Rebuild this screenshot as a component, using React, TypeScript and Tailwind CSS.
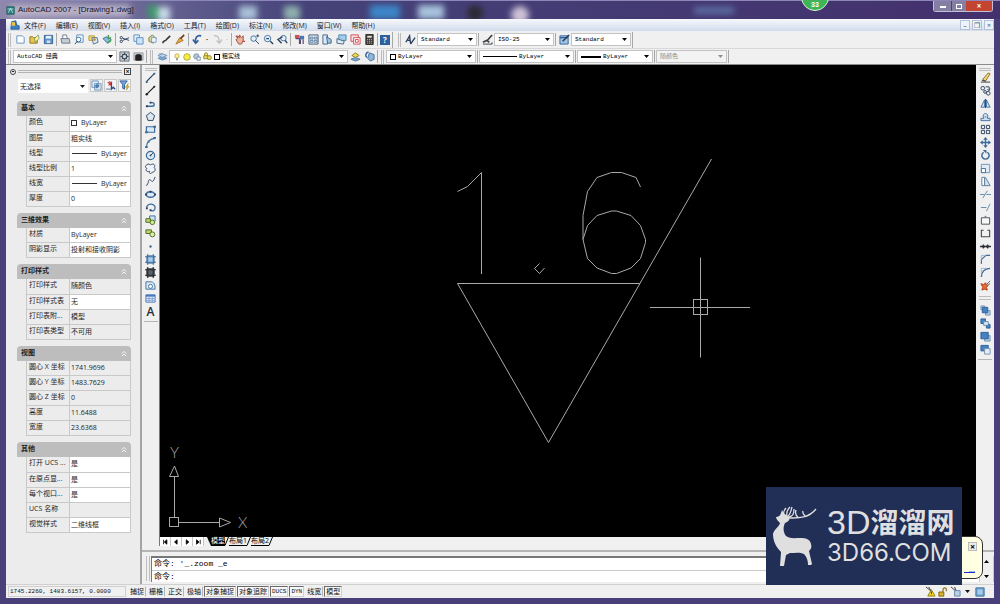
import { useState } from 'react'
import type { ReactNode } from 'react'
import clsx from 'clsx'

const NAVY = '#2b3f5c'
const BLUE = '#3c6c9c'
const SKY = '#a9cdec'

const icons: Record<string, ReactNode> = {
  new: <path d="M2 2h6l2 2v6H2z" fill="#fff" stroke="#5d8fc0" />,
  open: (
    <>
      <path d="M1 3h3l1 1h4v6H1z" fill="#e6c64d" stroke="#8d7420" />
      <path d="M6 5l4-4 1 4-4 4z" fill="#fff3a0" stroke="#4b7d4b" strokeWidth=".7" />
    </>
  ),
  save: (
    <>
      <path d="M1.500 1.500h9v9h-9z" fill="#5c93cc" stroke="#2d5f96" />
      <path d="M3 2h6v3H3z" fill="#e8f1fa" />
      <path d="M4 7h4v3H4z" fill="#cfdcea" />
    </>
  ),
  print: (
    <>
      <path d="M3 5V1h4l1 4" fill="#fff" stroke="#6f7a88" />
      <path d="M1 5h9l1 5H2z" fill="#c4ccd6" stroke="#6f7a88" />
    </>
  ),
  preview: (
    <>
      <path d="M3 1h7v8H3z" fill="#eef5fc" stroke="#5d8fc0" />
      <circle cx="5" cy="6" r="2.500" fill="#fff" stroke={BLUE} />
      <path d="M3.500 8L1 11" stroke={NAVY} />
    </>
  ),
  publish: (
    <>
      <path d="M1 2h6v5H1z" fill="#f4dd72" stroke="#b89a35" />
      <path d="M4 4h6l1 5-5 2z" fill="#dce9f6" stroke="#55708c" />
      <circle cx="7" cy="6" r="1.500" fill="#c88e2d" />
    </>
  ),
  dwf: (
    <>
      <path d="M1 5l4-2 5 3-4 4z" fill="#8fb9dd" stroke="#3f6f9c" />
      <path d="M7 1v4l3-1M6 10l4-3" stroke="#3e9e4e" strokeWidth="1.500" />
    </>
  ),
  cut: (
    <>
      <path d="M11 4L4 7M11 7L4 4.500" stroke={NAVY} />
      <circle cx="2.500" cy="4" r="1.300" stroke={NAVY} />
      <circle cx="2.500" cy="8" r="1.300" stroke={NAVY} />
    </>
  ),
  copy: (
    <>
      <path d="M1 1h6v7H1z" fill="#e4effa" stroke="#5d8fc0" />
      <path d="M4 4h7v7H4z" fill="#cfe3f6" stroke="#5d8fc0" />
    </>
  ),
  paste: (
    <>
      <path d="M2 4l4-3 4 4-3 5-5-2z" fill="#d9d493" stroke="#7d8250" />
      <path d="M5 4h5v5H5z" fill="#eef5fc" stroke="#5d8fc0" strokeWidth=".8" />
    </>
  ),
  match: <path d="M2 10c0-3 3-2 4-4l4-4" stroke="#33373d" strokeWidth="1.800" />,
  brush: (
    <>
      <path d="M1 11l4-7 4 3z" fill="#e5ad3e" stroke="#a8752a" />
      <path d="M6 5l4-4" stroke="#6b3b16" strokeWidth="1.800" />
    </>
  ),
  undo: <path d="M10 2C5 1 3 5 4 9M1 6l3 4 3-3" stroke="#2f5f9c" strokeWidth="1.800" />,
  redo: <path d="M2 2c5-1 6 3 6 7M11 6l-3 4-3-3" stroke="#bfc4ca" strokeWidth="1.500" />,
  pan: (
    <>
      <path d="M3 5V2l2 2V1l2 3 2-2v5l-2 4H4L1 6z" fill="#e9b69a" stroke="#9a5147" />
      <path d="M8 8h3M1 2l2 2" stroke="#c2434c" strokeWidth="1.500" />
    </>
  ),
  zoom: (
    <>
      <circle cx="5" cy="5" r="3" fill="#e3f0fb" stroke={BLUE} />
      <path d="M7 7l4 4M8 2h3M9.500 .5v3" stroke={NAVY} />
    </>
  ),
  zoomWin: (
    <>
      <circle cx="5" cy="5" r="3.500" fill="#e3f0fb" stroke={BLUE} />
      <path d="M3.500 5h3M8 8l3 3" stroke={NAVY} strokeWidth="1.500" />
    </>
  ),
  zoomPrev: (
    <>
      <circle cx="7" cy="4.500" r="3" fill="#e3f0fb" stroke={BLUE} />
      <path d="M9 7l2 3M6 3L1 6l4 4" stroke={NAVY} strokeWidth="1.500" />
    </>
  ),
  props: (
    <>
      <path d="M1 1h5v4H1z" fill="#d05252" />
      <path d="M6 2h5v4H6z" fill="#4d76b8" />
      <path d="M2 5h4v6M7 6v5M10 6v5" stroke="#5b4a70" strokeWidth="1.300" />
    </>
  ),
  center: (
    <>
      <path d="M1 1h10v10H1z" fill="#d6e7f7" stroke="#4c5a6a" />
      <path d="M2.500 3.500h3v2h-3zM2.500 7h3v2h-3zM7 3.500h3v2H7zM7 7h3v2H7z" stroke="#4c6f94" strokeWidth=".8" />
    </>
  ),
  palettes: (
    <>
      <path d="M1 1h5v10H1z" fill="#dce9f6" stroke="#3f6488" />
      <path d="M5 3l5 3v4H6z" fill="#9cc2e4" stroke="#3f6488" />
    </>
  ),
  sheet: (
    <>
      <path d="M3 1h8v6H3z" fill="#a3cbe9" stroke="#4b82b1" />
      <path d="M1 5l8 3-1 3-7-1z" fill="#ddebf7" stroke="#4a647e" />
    </>
  ),
  markup: (
    <>
      <path d="M1 1h8v7H1z" fill="#fbe3e3" stroke="#cc4950" />
      <path d="M4 4h7v7H4z" fill="#fff" stroke="#cc4950" />
      <path d="M6 6h3v3H6z" stroke="#cc4950" />
    </>
  ),
  calc: (
    <>
      <path d="M2 .5h8v11H2z" fill="#46403d" stroke="#2a2725" />
      <path d="M3.500 2h5v2h-5z" fill="#dfe5d8" />
      <path d="M3.500 6h5M3.500 8h5M3.500 10h5" stroke="#c9c0b8" strokeDasharray="1 1" />
    </>
  ),
  textStyle: <path d="M1 9l4-7 1 8M3 7h3M11 4L6 11" stroke={NAVY} strokeWidth="1.500" />,
  dimStyle: (
    <>
      <path d="M1 9l4-2 3 2M5 8l6-7" stroke="#3a3f46" strokeWidth="1.800" />
      <path d="M1 11h10V9" stroke="#3a3f46" />
    </>
  ),
  tableStyle: (
    <>
      <path d="M1 2h9v9H1z" fill="#9fc3e6" stroke="#33639a" />
      <path d="M1 4h9" stroke="#33639a" strokeWidth="1.500" />
      <path d="M4 8l7-7" stroke="#2a3a4c" strokeWidth="1.600" />
    </>
  ),
  gear: (
    <>
      <path d="M1 1h10v10H1z" fill="#cfd8e0" stroke="#5a6672" />
      <circle cx="6" cy="6" r="2.500" stroke="#3c4752" strokeWidth="1.300" />
      <path d="M6 1.500v2M6 8.500v2M1.500 6h2M8.500 6h2M3 3l1 1M8 8l1 1M9 3L8 4M4 8L3 9" stroke="#3c4752" />
    </>
  ),
  wsHome: (
    <>
      <path d="M1 2h10v8H1z" fill="#c6c9cd" stroke="#9a9ea3" />
      <path d="M3 5l1-1h4l1 1v5H3z" fill="#222" stroke="#222" />
    </>
  ),
  layers: (
    <>
      <path d="M1 8l5-2 5 2-5 2z" fill="#7aa5cf" stroke="#6d93b8" />
      <path d="M1 5l5-2 5 2-5 2z" fill="#bcd6ee" stroke="#6d93b8" />
      <path d="M2 3h4" stroke="#8b9bab" />
    </>
  ),
  bulb: (
    <>
      <circle cx="6" cy="4.500" r="3.300" fill="#fff29a" stroke="#a98f22" />
      <path d="M4.500 8h3v3h-3z" fill="#8a93a0" />
    </>
  ),
  sun: <circle cx="6" cy="6" r="5" fill="#f4ee42" stroke="#8f8b22" />,
  freeze: (
    <>
      <circle cx="5" cy="5" r="4" fill="#b5c6d6" stroke="#5e7b96" />
      <path d="M6 6h5v5H6z" fill="#e3edf6" stroke="#5e7b96" />
    </>
  ),
  lock: (
    <>
      <path d="M2 5V3a2 2 0 014 0v2M1 5h6v4H1z" fill="#efe063" stroke="#7d7620" />
      <circle cx="8.500" cy="7.500" r="2.700" fill="#e4dc59" stroke="#7d7620" />
    </>
  ),
  layerPrev: (
    <>
      <path d="M1 9l5-2 5 2-5 2z" fill="#7aa5cf" stroke="#50789f" />
      <path d="M2 5l4-3 4 3-4 2z" fill="#ebd75b" stroke="#8b7c24" />
    </>
  ),
  layerState: (
    <>
      <path d="M6 2l5 2v5l-4 2-3-3z" fill="#8fb6db" stroke="#3f6b98" />
      <path d="M5 1C2 2 1 5 3 7" stroke="#2f5f9c" strokeWidth="1.600" />
    </>
  ),
  line: (
    <>
      <path d="M1 11L11 1" stroke={NAVY} strokeWidth="1.300" />
      <path d="M1 10h2v2H1zM9 1h2v2H9z" fill={BLUE} />
    </>
  ),
  xline: (
    <>
      <path d="M1 11L11 1" stroke="#222" strokeWidth="1.400" />
      <circle cx="2" cy="10" r="1.300" fill="#222" />
      <circle cx="10" cy="2" r="1" fill="#222" />
    </>
  ),
  pline: (
    <>
      <path d="M2 9h6a2 2 0 000-4H6" stroke={BLUE} strokeWidth="1.500" />
      <path d="M1 8h2v2H1zM5 4h2v2H5z" fill={NAVY} />
    </>
  ),
  polygon: <path d="M6 1.500l4.500 3.500-1.800 5.300H3.300L1.500 5z" stroke={NAVY} fill="#dce8f2" />,
  rect: (
    <>
      <path d="M1.500 3h9v6h-9z" stroke={BLUE} fill="#dce8f2" strokeWidth="1.300" />
      <path d="M0 8h3v2H0zM9 2h3v2H9z" fill={BLUE} />
    </>
  ),
  arc: (
    <>
      <path d="M1.500 11C2 5 5 2 11 1.500" stroke={BLUE} strokeWidth="1.300" />
      <path d="M0 10h3v2H0zM9 0h3v2H9zM3 4h2v2H3z" fill={BLUE} />
    </>
  ),
  circle: (
    <>
      <circle cx="6" cy="6" r="4.500" stroke={BLUE} fill="#dceaf7" strokeWidth="1.300" />
      <path d="M6 6l3-3M5 6h2M6 5v2" stroke={NAVY} />
    </>
  ),
  cloud: <path d="M2 2c2-2 3 0 4 0 3-2 6 0 4 3 2 2 1 5-2 5-2 3-4 1-3-1-3 1-5-1-3-3-2-1-2-3 0-4z" stroke={NAVY} fill="#eef4f9" />,
  spline: <path d="M1 10c3 1 2-6 4-6s3 6 6-3" stroke={NAVY} />,
  ellipse: (
    <>
      <ellipse cx="6" cy="6" rx="4.500" ry="3" stroke={BLUE} fill="#dceaf7" strokeWidth="1.400" />
      <path d="M0 5h2v2H0zM10 5h2v2h-2zM5 2h2v2H5z" fill={NAVY} />
    </>
  ),
  ellArc: (
    <>
      <path d="M2 7c-1-6 9-6 9-1 0 4-3 4-5 3" stroke={BLUE} strokeWidth="1.400" />
      <path d="M1 6h2v2H1zM5 8h2v2H5z" fill={NAVY} />
    </>
  ),
  insert: (
    <>
      <path d="M5 1h6v6H5z" fill="#cfe2f3" stroke={BLUE} />
      <path d="M1 4h5v4H1z" fill="#b8d46b" stroke="#4d6a1e" />
      <circle cx="8" cy="8" r="2.500" fill="#d5e79a" stroke="#4d6a1e" />
    </>
  ),
  block: (
    <>
      <path d="M1 2h6v4H1z" fill="#b8d46b" stroke="#4d6a1e" />
      <circle cx="8" cy="7" r="2.700" fill="#e0efae" stroke="#4d6a1e" />
    </>
  ),
  point: <circle cx="6" cy="6" r="1.300" fill={BLUE} />,
  hatch: (
    <>
      <path d="M2 2h8v8H2z" fill={SKY} stroke={BLUE} />
      <path d="M3 0v12M9 0v12M0 3h12M0 9h12" stroke={BLUE} />
    </>
  ),
  gradient: (
    <>
      <path d="M2 2h8v8H2z" fill="#59616a" stroke="#222" />
      <path d="M3 0v12M9 0v12M0 3h12M0 9h12" stroke="#2b2f34" strokeWidth="1.300" />
    </>
  ),
  region: (
    <>
      <path d="M1 2h6c4 1 4 5 4 8H1z" fill="#dceaf7" stroke={BLUE} />
      <circle cx="6" cy="7" r="2.200" fill="#fff" stroke={BLUE} />
    </>
  ),
  table: (
    <>
      <path d="M1 2h10v8H1z" fill="#e6f0fa" stroke="#4775b8" />
      <path d="M1 3h10" stroke="#4775b8" strokeWidth="2" />
      <path d="M1 6h10M1 8h10M4.500 3v7M8 3v7" stroke="#7fa3d4" />
    </>
  ),
  erase: (
    <>
      <path d="M3 8l6-7 2 1-5 8z" fill="#f1d77a" stroke="#8a6a26" />
      <path d="M1 11h10M2 9l4 1" stroke="#333" />
    </>
  ),
  dup: (
    <>
      <circle cx="3" cy="3.500" r="2" stroke={NAVY} />
      <circle cx="5.500" cy="7.500" r="1.500" stroke={NAVY} />
      <circle cx="9" cy="9" r="2" stroke={NAVY} />
      <path d="M6 2h4v4M8 5l2 1 1-2" stroke={NAVY} />
    </>
  ),
  mirror: (
    <>
      <path d="M5 2v8H1zM7 2v8h4z" fill="#cfe2f3" stroke={BLUE} />
      <path d="M6 1v10" stroke={NAVY} />
    </>
  ),
  offset: (
    <>
      <path d="M1 10.500h10V8H8c3-7-7-7-4 0H1z" fill="#cfe2f3" stroke={BLUE} />
      <path d="M6 6v1" stroke={BLUE} strokeWidth="2" />
    </>
  ),
  array: <path d="M1.500 1.500h3.500V5H1.500zM7 1.500h3.500V5H7zM1.500 7H5v3.500H1.500zM7 7h3.500v3.500H7z" stroke={NAVY} fill="#e9eff5" />,
  move: (
    <>
      <path d="M6 2v8M2 6h8" stroke={BLUE} strokeWidth="1.500" />
      <path d="M6 0l2.500 3h-5zM6 12l2.500-3h-5zM0 6l3-2.500v5zM12 6L9 3.500v5z" fill={BLUE} />
    </>
  ),
  rotate: (
    <>
      <path d="M8 2.500A4 4 0 114 2.500" stroke={BLUE} strokeWidth="1.600" />
      <path d="M3 0h4v4z" fill={BLUE} />
    </>
  ),
  scale: (
    <>
      <path d="M1.500 1.500h9v9h-9z" fill="#e0edf8" stroke="#6b93b8" />
      <path d="M1.500 6H6v4.500H1.500z" fill="#fff" stroke={BLUE} />
    </>
  ),
  stretch: (
    <>
      <path d="M2 1.500h3v9H2z" fill="#fff" stroke="#5c7b99" />
      <path d="M5 1.500h1l5 9H5z" fill="#cfe2f3" stroke="#5c7b99" />
    </>
  ),
  trim: <path d="M0 6h5M7 6h5M3 10l5-8" stroke="#5c86ad" />,
  extend: <path d="M1 6h6M7 10l4-8" stroke="#5c86ad" />,
  breakPt: (
    <>
      <path d="M1.500 3h9v7h-9z" stroke="#454b52" fill="#f8f8f8" />
      <path d="M5 1.500h2" stroke={BLUE} />
    </>
  ),
  breakAt: <path d="M4 2.500H1.500v7h9v-7H8" stroke="#454b52" strokeWidth="1.200" />,
  join: <path d="M0 6h12M3 4l2 2-2 2M9 4L7 6l2 2" stroke="#2b2f34" strokeWidth="1.500" />,
  chamfer: (
    <>
      <path d="M1.500 11V6l5-4.500H11" stroke={BLUE} strokeWidth="1.200" />
      <path d="M1.500 6V1.500h5" stroke="#9bb4cc" />
    </>
  ),
  fillet: (
    <>
      <path d="M1.500 11c0-6 3-9 9.500-9.500" stroke={BLUE} strokeWidth="1.500" />
      <path d="M1.500 7V1.500H7" stroke="#9bb4cc" />
    </>
  ),
  explode: (
    <>
      <path d="M1 4l3 1 2-2 1 2 2 1-2 2 1 3-3-1-3 1 1-3z" fill="#e36b32" stroke="#b23a1b" />
      <path d="M7 5l4-4M9 5l2-1" stroke="#555" />
    </>
  ),
  front: (
    <>
      <path d="M6 6h5v5H6zM1 1h4v4H1z" fill="#b8d0e6" stroke="#7593b0" />
      <path d="M2.500 2.500h6v6h-6z" fill="#4682c2" stroke="#2b5f9a" />
    </>
  ),
  above: (
    <>
      <path d="M1 1h5v5H1z" fill="#4682c2" stroke="#2b5f9a" />
      <path d="M7 7h4v4H7z" fill="#4682c2" stroke="#2b5f9a" />
      <path d="M4 4h5v4H4z" fill="#e3edf6" stroke="#5f87ae" />
    </>
  ),
  back: (
    <>
      <path d="M5 5h6v6H5z" fill="#b8d0e6" stroke="#7593b0" />
      <path d="M1 1.500h8v7H1z" fill="#4682c2" stroke="#2b5f9a" />
    </>
  ),
  under: (
    <>
      <path d="M1 1.500h8v6H1z" fill="#4682c2" stroke="#2b5f9a" />
      <path d="M5 5h6v6H5z" fill="#e3edf6" stroke="#7593b0" />
    </>
  ),
  pickAdd: (
    <>
      <path d="M1 1h7v7H1zM4 4h7v7H4z" fill="#dceaf7" stroke="#6d93b8" />
      <path d="M6.500 4v5M4 6.500h5" stroke={BLUE} strokeWidth="1.300" />
    </>
  ),
  pickObj: (
    <>
      <path d="M1 10h5M5 1v4" stroke="#8a97a6" strokeWidth="1.200" />
      <path d="M7 2v8l2-2 2 2" stroke="#2c4a86" strokeWidth="1.500" />
      <path d="M3 2l4 4M7 2L4 6" stroke="#c33" strokeWidth="1.200" />
    </>
  ),
  quick: (
    <>
      <path d="M1 1h8L6 5v5L4 9V5z" fill="#76a6d8" stroke="#2b5f9a" />
      <path d="M10 4L7 8h2l-1 3 3-4H9z" fill="#f5d23a" stroke="#9b7d14" strokeWidth=".6" />
    </>
  ),
  app: (
    <>
      <path d="M1 1h10v10H1z" fill="#2d7f80" stroke="#1d5b5c" />
      <path d="M3 9l3-6 3 6M2 4h8" stroke="#d5efec" />
    </>
  ),
  drawing: (
    <>
      <path d="M2 2l5-1 1 5 3 1v4H1z" fill="#3d7fc0" stroke="#285a8c" />
      <path d="M2 2l4 1v4H2z" fill="#f0c440" />
    </>
  ),
  warn: (
    <>
      <path d="M1 1l6 5M4 1l3 5" stroke="#333" />
      <path d="M7 4l4 7H3z" fill="#f4d921" stroke="#8c7a0e" />
      <path d="M7 6v2.500M7 9.500v.5" stroke="#222" />
    </>
  ),
  unlocked: (
    <>
      <path d="M1 6h6v5H1z" fill="#d9b22c" stroke="#6e580f" />
      <path d="M6 6V3a2 2 0 014 0v2" stroke="#8a7118" strokeWidth="1.400" />
    </>
  ),
  tray: (
    <>
      <path d="M1 1l6 5M5 1l2 5" stroke="#333" />
      <path d="M5 5h6v6H5z" fill="#b9d2e8" stroke="#6484a3" />
    </>
  ),
  clean: (
    <>
      <path d="M1 1h10v10H1z" fill="#6ea3d0" stroke="#3a6a96" />
      <path d="M3 3h6v6H3z" fill="#a8cdec" />
    </>
  ),
}

function Icon({ name, className = 'size-[11px]' }: { name: string; className?: string }) {
  return (
    <svg viewBox="0 0 12 12" fill="none" className={clsx('shrink-0', className)} aria-hidden="true">
      {icons[name]}
    </svg>
  )
}

function ToolButton({ name, label }: { name: string; label?: string }) {
  return (
    <button aria-label={label ?? name} className="flex h-[13px] w-[14px] shrink-0 items-center justify-center hover:bg-[#dbe7f4]">
      <Icon name={name} />
    </button>
  )
}

function Grip() {
  return <div className="mx-[2px] h-[14px] w-[3px] shrink-0 border-x border-[#bcbcbc]" />
}

function Sep() {
  return <div className="mx-px h-[13px] w-px shrink-0 bg-[#a8a8a8]" />
}

function Caret({ className }: { className?: string }) {
  return (
    <svg viewBox="0 0 5 3" className={clsx('pointer-events-none mr-[3px] h-[3px] w-[5px] shrink-0', className)} aria-hidden="true">
      <path d="M0 0h5L2.500 3z" fill="currentColor" />
    </svg>
  )
}

type ComboProps = {
  label: string
  options: string[]
  className: string
  children?: ReactNode
  disabled?: boolean
}

function Combo({ label, options, className, children, disabled }: ComboProps) {
  return (
    <div
      className={clsx(
        'flex h-[13px] shrink-0 items-center gap-[2px] border border-[#c3c3c3] pl-[3px]',
        disabled ? 'bg-[#f3f3f3] text-[#8d8d8d]' : 'bg-white text-black',
        className
      )}
    >
      {children}
      <select
        aria-label={label}
        disabled={disabled}
        className="min-w-0 flex-1 appearance-none bg-transparent font-['Liberation_Mono','Noto_Sans_CJK_SC',monospace] text-[6px] leading-[11px] outline-none"
      >
        {options.map((o) => (
          <option key={o}>{o}</option>
        ))}
      </select>
      <Caret />
    </div>
  )
}

const menus = ['文件(F)', '编辑(E)', '视图(V)', '插入(I)', '格式(O)', '工具(T)', '绘图(D)', '标注(N)', '修改(M)', '窗口(W)', '帮助(H)']

const standardTools = [
  ['new', 'open', 'save'],
  ['print', 'preview', 'publish', 'dwf'],
  ['cut', 'copy', 'paste', 'match', 'brush'],
]

const drawTools = [
  'line', 'xline', 'pline', 'polygon', 'rect', 'arc', 'circle', 'cloud', 'spline', 'ellipse',
  'ellArc', 'insert', 'block', 'point', 'hatch', 'gradient', 'region', 'table',
]

const modifyTools = [
  'erase', 'dup', 'mirror', 'offset', 'array', 'move', 'rotate', 'scale', 'stretch',
  'trim', 'extend', 'breakPt', 'breakAt', 'join', 'chamfer', 'fillet', 'explode',
]

type Row = { label: string; value: string; mark?: 'box' | 'line'; locked?: boolean }

const sections: { title: string; rows: Row[] }[] = [
  {
    title: '基本',
    rows: [
      { label: '颜色', value: 'ByLayer', mark: 'box' },
      { label: '图层', value: '粗实线' },
      { label: '线型', value: 'ByLayer', mark: 'line' },
      { label: '线型比例', value: '1' },
      { label: '线宽', value: 'ByLayer', mark: 'line' },
      { label: '厚度', value: '0' },
    ],
  },
  {
    title: '三维效果',
    rows: [
      { label: '材质', value: 'ByLayer' },
      { label: '阴影显示', value: '投射和接收阴影' },
    ],
  },
  {
    title: '打印样式',
    rows: [
      { label: '打印样式', value: '随颜色', locked: true },
      { label: '打印样式表', value: '无' },
      { label: '打印表附...', value: '模型', locked: true },
      { label: '打印表类型', value: '不可用', locked: true },
    ],
  },
  {
    title: '视图',
    rows: [
      { label: '圆心 X 坐标', value: '1741.9696', locked: true },
      { label: '圆心 Y 坐标', value: '1483.7629', locked: true },
      { label: '圆心 Z 坐标', value: '0', locked: true },
      { label: '高度', value: '11.6488', locked: true },
      { label: '宽度', value: '23.6368', locked: true },
    ],
  },
  {
    title: '其他',
    rows: [
      { label: '打开 UCS ...', value: '是' },
      { label: '在原点显...', value: '是' },
      { label: '每个视口...', value: '是' },
      { label: 'UCS 名称', value: '', locked: true },
      { label: '视觉样式', value: '二维线框' },
    ],
  },
]

function TitleBar() {
  return (
    <header className="relative flex h-[19px] shrink-0 items-center overflow-hidden border-t border-[#8d86b8] bg-linear-to-r from-[#8f88ad] via-[#454379] via-30% to-[#43306d] pl-[6px]">
      {/* desktop showing through the glass frame */}
      <div className="absolute inset-0 blur-[3px]">
        <div className="absolute top-[4px] left-[10px] h-[12px] w-[120px] bg-[#b9b2c8]" />
        <div className="absolute top-[4px] left-[148px] h-[14px] w-[10px] bg-[#3f9a6b]" />
        <div className="absolute top-[6px] left-[158px] h-[14px] w-[12px] bg-[#c9dcea]" />
        <div className="absolute top-[5px] left-[239px] h-[14px] w-[18px] bg-[#a9c0d8]" />
        <div className="absolute top-[5px] left-[284px] h-[14px] w-[16px] bg-[#90b0ae]" />
        <div className="absolute top-[4px] left-[370px] h-[14px] w-[30px] bg-[#3c86c8]" />
        <div className="absolute top-[4px] left-[418px] h-[14px] w-[26px] bg-[#a9c3dc]" />
        <div className="absolute top-[4px] left-[467px] size-[16px] rounded-full bg-[#2c2b33]" />
        <div className="absolute top-[5px] left-[511px] size-[18px] rounded-full bg-[#cfc3d8]" />
        <div className="absolute top-[6px] left-[694px] h-[7px] w-[40px] bg-[#5c6ea3]" />
      </div>
      <Icon name="app" className="relative size-[9px]" />
      <h1 className="relative ml-[3px] flex-1 font-['Liberation_Sans',sans-serif] text-[8px] leading-[12px] text-[#16131f]">
        AutoCAD 2007 - [Drawing1.dwg]
      </h1>
      <div className="relative mr-[7px] flex h-[11px] self-start overflow-hidden rounded-b-[3px] border border-t-0 border-[#c5bfd6] text-white">
        <button aria-label="最小化" className="flex w-[18px] items-end justify-center border-r border-[#4b4668] bg-[#8580a3] pb-[3px]">
          <span className="h-[2px] w-[6px] bg-white" />
        </button>
        <button aria-label="最大化" className="flex w-[14px] items-center justify-center bg-[#8580a3]">
          <span className="h-[5px] w-[6px] border border-white" />
        </button>
        <button aria-label="关闭" className="flex w-[26px] items-center justify-center bg-[#c24431] text-[8px] leading-none font-bold">
          ×
        </button>
      </div>
    </header>
  )
}

function MenuBar() {
  return (
    <div className="flex h-[12px] shrink-0 items-center bg-linear-to-b from-[#f6f8fc] to-[#d3dcec] pl-[4px]">
      <Icon name="drawing" className="size-[10px]" />
      <nav className="ml-[4px] flex flex-1 gap-[10px]">
        {menus.map((m) => (
          <button key={m} className="text-[7px] leading-[11px] whitespace-nowrap text-[#1b1b1b]">
            {m}
          </button>
        ))}
      </nav>
      <div className="flex gap-[2px] text-[7px] leading-[9px] text-[#41536d]">
        {['–', '❐', '×'].map((s) => (
          <button key={s} aria-label={`文档窗口 ${s}`} className="size-[10px] border border-[#b3c1d8] bg-[#eef3fa]">
            {s}
          </button>
        ))}
      </div>
    </div>
  )
}

function Toolbars() {
  return (
    <div className="shrink-0 border-b border-[#8c8c8c]">
      <div className="flex h-[18px] items-center border-b border-[#d8d8d8]">
        <Grip />
        {standardTools.map((group) => (
          <div key={group[0]} className="flex items-center">
            {group.map((t) => (
              <ToolButton key={t} name={t} />
            ))}
            <Sep />
          </div>
        ))}
        <ToolButton name="undo" />
        <button aria-label="放弃列表" className="w-[6px] text-[7px] leading-none font-bold">·</button>
        <ToolButton name="redo" />
        <button aria-label="重做列表" className="w-[6px] text-[7px] leading-none text-[#999]">·</button>
        <Sep />
        {['pan', 'zoom', 'zoomWin', 'zoomPrev'].map((t) => (
          <ToolButton key={t} name={t} />
        ))}
        <Sep />
        {['props', 'center', 'palettes', 'sheet', 'markup', 'calc'].map((t) => (
          <ToolButton key={t} name={t} />
        ))}
        <Sep />
        <button aria-label="帮助" className="ml-px size-[10px] bg-[#2d5f9e] text-[8px] leading-[10px] font-bold text-white">?</button>
        <div className="ml-[2px] h-[16px] w-px bg-[#a8a8a8]" />
        <div className="ml-[3px] flex items-center">
          <Grip />
          <ToolButton name="textStyle" />
          <Combo label="文字样式" options={['Standard']} className="w-[60px]" />
          <Sep />
          <ToolButton name="dimStyle" />
          <Combo label="标注样式" options={['ISO-25']} className="w-[60px]" />
          <Sep />
          <ToolButton name="tableStyle" />
          <Combo label="表格样式" options={['Standard']} className="w-[60px]" />
          <div className="ml-px h-[16px] w-px bg-[#a8a8a8]" />
        </div>
      </div>
      <div className="flex h-[15px] items-center">
        <Grip />
        <Combo label="工作空间" options={['AutoCAD 经典']} className="w-[104px]" />
        <ToolButton name="gear" />
        <ToolButton name="wsHome" />
        <Sep />
        <Grip />
        <ToolButton name="layers" />
        <Combo label="图层" options={['粗实线']} className="w-[179px]">
          <Icon name="bulb" className="size-[8px]" />
          <Icon name="sun" className="size-[8px]" />
          <Icon name="freeze" className="size-[8px]" />
          <Icon name="lock" className="size-[9px]" />
          <span className="size-[6px] shrink-0 border border-black" />
        </Combo>
        <ToolButton name="layerPrev" />
        <ToolButton name="layerState" />
        <Sep />
        <Grip />
        <Combo label="颜色" options={['ByLayer']} className="w-[90px]">
          <span className="size-[6px] shrink-0 border border-black" />
        </Combo>
        <Sep />
        <Combo label="线型" options={['ByLayer']} className="w-[95px]">
          <span className="h-px w-[34px] shrink-0 bg-black" />
        </Combo>
        <Sep />
        <Combo label="线宽" options={['ByLayer']} className="w-[76px]">
          <span className="h-[2px] w-[20px] shrink-0 bg-black" />
        </Combo>
        <Sep />
        <Combo label="打印样式" options={['随颜色']} className="w-[71px]" disabled />
        <Sep />
      </div>
    </div>
  )
}

function PropertiesPanel() {
  return (
    <aside className="w-[136px] shrink-0 border-r-2 border-[#a5a5a5] bg-[#ececec] pr-[9px] text-[7px] text-[#1e1e1e]">
      <div className="flex h-[13px] items-center gap-[2px] pl-[4px]">
        <button aria-label="自动隐藏" className="flex size-[6px] items-center justify-center rounded-full border border-[#444]">
          <span className="h-px w-[2px] bg-[#222]" />
        </button>
        <div className="h-[3px] flex-1 border-y border-[#b3b3b3]" />
        <button aria-label="关闭特性" className="flex size-[7px] items-center justify-center border border-[#444] text-[7px] leading-none font-bold">
          ×
        </button>
      </div>

      <div className="flex h-[23px] items-start pt-px pl-[12px]">
        <div className="flex h-[14px] w-[70px] items-center bg-white pl-[2px]">
          <select aria-label="选择对象" className="min-w-0 flex-1 appearance-none bg-transparent text-[7px] leading-[13px] outline-none">
            <option>无选择</option>
          </select>
          <Caret />
        </div>
        <div className="flex flex-1 justify-end gap-[1px]">
          {['pickAdd', 'pickObj', 'quick'].map((t) => (
            <button key={t} aria-label={t} className="flex size-[13px] items-center justify-center border border-[#c9c9c9] bg-[#f4f4f4]">
              <Icon name={t} />
            </button>
          ))}
        </div>
      </div>

      {sections.map((s) => (
        <section key={s.title} className="mb-[6px] pl-[11px]">
          <h2 className="flex h-[15px] items-center justify-between rounded-t-[4px] bg-[#bdbdbd] px-[4px] text-[7px] font-bold">
            {s.title}
            <svg viewBox="0 0 7 8" fill="none" stroke="#fff" className="h-[7px] w-[6px]" aria-hidden="true">
              <path d="M1 4l2.500-2.500L6 4M1 7l2.500-2.500L6 7" />
            </svg>
          </h2>
          <div className="pl-[9px]">
            <table className="w-full table-fixed border-collapse">
              <tbody>
                {s.rows.map((r) => (
                  <tr key={r.label} className="h-[15px] border-b border-[#c9c9c9]">
                    <th scope="row" className="w-[43px] border-x border-[#c9c9c9] bg-[#ececec] p-0 pb-[2px] pl-[2px] text-left leading-[10px] font-normal whitespace-nowrap">
                      {r.label}
                    </th>
                    <td className={clsx('border-r border-[#c9c9c9] p-0 pl-px leading-[10px] whitespace-nowrap', r.locked ? 'bg-[#ececec]' : 'bg-white')}>
                      <span className="flex items-center">
                        {r.mark === 'box' && <span className="mr-[4px] size-[6px] border border-[#333]" />}
                        {r.mark === 'line' && <span className="mr-[4px] ml-px h-px w-[25px] bg-[#333]" />}
                        {r.value}
                      </span>
                    </td>
                  </tr>
                ))}
              </tbody>
            </table>
          </div>
        </section>
      ))}
    </aside>
  )
}

function ModelSpace() {
  return (
    <svg className="block h-0 w-full flex-1 bg-black" fill="none" stroke="#a9a9a9" strokeWidth="1" aria-label="模型空间">
      {/* surface roughness value */}
      <polyline points="297.5,126.500 307.500,121.500 321.500,107.500 321.500,209" />
      <polyline points="480.500,122 476,112.500 461.500,107.500 451.500,107.500 437,112.500 427.500,126.500 423,150.500 423,174.500 427.500,193.500 437,203 451.500,208.500 456.500,208.500 471,203 480.500,193.500 485.500,177.500 485.500,174.500 480.500,160.500 471,150.500 456.500,146 451.500,146 437,150.500 427.500,160.500 423,174.500" />
      <polyline points="379.500,198.500 374.500,203.500 379.500,208.500 384.500,203" />

      {/* roughness symbol */}
      <path d="M480 218.500H297.500L388.500 377.500L551.500 94" />

      {/* cursor */}
      <path d="M490 242.500H590M540.500 192.500V292.500" />
      <rect x="533.5" y="234.500" width="14" height="15" />

      {/* UCS icon */}
      <rect x="9.500" y="452.500" width="9" height="9" />
      <path d="M14.500 452V412M9.500 411.500h9L14.500 401zM19 457.500H59M59.500 453v9L70.500 457.500z" />
      <g stroke="none" fill="#a9a9a9" fontSize="15" fontWeight="300" fontFamily="Lato, sans-serif">
        <text x="10" y="393">Y</text>
        <text x="78" y="463">X</text>
      </g>
    </svg>
  )
}

function LayoutTabs() {
  const [active, setActive] = useState('模型')
  return (
    <div className="flex h-[9px] shrink-0 items-center bg-[#f0f0f0] text-[7px] leading-[9px]">
      {['M2 1v6M6.500 1L3 4l3.500 3z', 'M5.500 1L2 4l3.500 3z', 'M3 1l3.500 3L3 7z', 'M2 1l3.500 3L2 7zM7 1v6'].map((d) => (
        <button key={d} aria-label="切换布局" className="flex h-[9px] w-[11px] items-center justify-center border-r border-[#c5c5c5] bg-white">
          <svg viewBox="0 0 8 8" className="size-[6px]" stroke="#000" aria-hidden="true">
            <path d={d} />
          </svg>
        </button>
      ))}
      <div className="flex pl-[3px]">
        {['模型', '布局1', '布局2'].map((t) => (
          <button key={t} onClick={() => setActive(t)} className="flex h-[9px]">
            {t === active && (
              <svg viewBox="0 0 4 9" className="h-[9px] w-[4px]" aria-hidden="true">
                <path d="M0 0h4v9z" />
              </svg>
            )}
            <span className={clsx('h-[9px] border-b border-black leading-[8px]', t === active ? 'bg-black text-white' : 'text-black')}>{t}</span>
            <svg viewBox="0 0 4 9" fill={t === active ? '#000' : 'none'} stroke="#000" className="h-[9px] w-[4px]" aria-hidden="true">
              <path d="M0 8.500L3.500 0" />
            </svg>
          </button>
        ))}
      </div>
    </div>
  )
}

function CommandLine() {
  return (
    <div className="flex h-[34px] shrink-0 border-t-2 border-[#b4b4b4] bg-[#f0f0f0] pt-[4px] pb-[2px] pl-[4px]">
      <div className="h-[25px] w-[4px] border-x border-[#bcbcbc]" />
      <div className="ml-px flex-1 border-t-2 border-l border-[#777] bg-white font-['Liberation_Mono','Noto_Sans_CJK_SC',monospace] text-[8px]">
        <p className="h-[12px] pl-[2px] leading-[12px]">命令: &apos;_.zoom _e</p>
        <label className="flex h-[12px] items-center border-t border-[#c9c9c9] pl-[2px] leading-[11px]">
          命令:
          <input className="ml-[4px] h-[11px] flex-1 bg-transparent outline-none" />
        </label>
      </div>
      <div className="flex w-[15px] flex-col items-center justify-between border-x border-[#c9c9c9] py-[4px]">
        <Caret className="ml-[3px] rotate-180" />
        <Caret className="ml-[3px]" />
      </div>
    </div>
  )
}

const modes = [
  { label: '捕捉' },
  { label: '栅格' },
  { label: '正交' },
  { label: '极轴' },
  { label: '对象捕捉', on: true },
  { label: '对象追踪', on: true },
  { label: 'DUCS', on: true },
  { label: 'DYN', on: true },
  { label: '线宽' },
  { label: '模型', on: true },
]

function StatusBar() {
  return (
    <footer className="flex h-[14px] shrink-0 items-center border-t border-[#d0d0d0] bg-[#f0f0f0] px-[2px] text-[7px] text-[#111]">
      <div className="h-[11px] w-[118px] border border-[#cfcfcf] pl-px font-['Liberation_Mono',monospace] text-[6px] leading-[10px]">
        1745.2260, 1483.6157, 0.0000
      </div>
      <div className="ml-[2px] flex flex-1 gap-px">
        {modes.map((m) => (
          <button
            key={m.label}
            aria-pressed={!!m.on}
            className={clsx(
              'h-[11px] border px-px leading-[9px] whitespace-nowrap',
              m.on ? 'border-[#6a6a6a] border-r-[#d0d0d0] border-b-[#d0d0d0] bg-[#f7f7f7]' : 'border-transparent border-r-[#b5b5b5]',
              /^[A-Z]/.test(m.label) && "font-['Liberation_Mono',monospace] text-[6px]"
            )}
          >
            {m.label}
          </button>
        ))}
      </div>
      <div className="flex items-center gap-[2px] pr-[7px]">
        <Icon name="warn" />
        <Icon name="unlocked" className="size-[10px]" />
        <Icon name="tray" />
        <Caret className="ml-[2px]" />
        <Icon name="clean" className="size-[10px]" />
      </div>
    </footer>
  )
}

function Watermark() {
  return (
    <div className="absolute right-[38px] bottom-[19px] z-20 flex h-[98px] w-[196px] items-center bg-[#212e55] text-[#dfdfdf]">
      <svg viewBox="0 0 46 60" className="ml-[6px] h-[60px] w-[46px] shrink-0" fill="#dfdfdf" aria-hidden="true">
        <path d="M4 11c2 0 4-1 5-4l1-3c1 2 2 4 4 5l4 2c0 3-2 5-5 6-2 4-2 9 1 13 4 3 9 2 14 2 6 0 10 1 11 6 1 3 0 5-2 7l3 13-1 1h-3c0-4-1-8-4-11-4-2-9-1-14-1l-4 2-2 11H8l1-14C4 41 1 35 1 28c1-5 6-7 7-11C6 15 4 13 4 11z" />
        <path
          d="M12 9c-1-3 0-5 2-7M15 10c-1-4 0-6 3-9M16 10c2-1 3-5 4-9M17 11c4-1 5-3 5-8M18 12c7 0 18 1 26-9M26 11c-3-2-3-4-2-7M33 10c-2-2-3-3-2-5"
          fill="none"
          stroke="#dfdfdf"
          strokeWidth="1.300"
        />
      </svg>
      <div className="ml-[9px] whitespace-nowrap">
        <p className="flex items-center leading-[33px]">
          <span className="font-['Liberation_Sans',sans-serif] text-[34px]">3D</span>
          <span className="text-[28px] font-bold">溜溜网</span>
        </p>
        <p className="font-['Inter',sans-serif] text-[24px] leading-[28px]">3D66.COM</p>
      </div>
    </div>
  )
}

export default function App() {
  return (
    <div className="relative flex min-h-screen flex-col overflow-hidden bg-[#4a4079] font-['Open_Sans','Noto_Sans_CJK_SC',sans-serif]">
      <TitleBar />
      <div className="absolute -top-[17px] right-[171px] z-10 flex size-[28px] items-end justify-center rounded-full border border-[#d5f3da] bg-[#3fb557] pb-px font-['Liberation_Sans',sans-serif] text-[7px] leading-[8px] font-bold text-white">
        33
      </div>

      <div className="mx-[6px] mb-[6px] flex min-h-0 flex-1 flex-col bg-[#f0f0f0]">
        <MenuBar />
        <Toolbars />
        <div className="flex flex-1">
          <PropertiesPanel />
          <div className="flex min-w-0 flex-1 flex-col">
            <div className="flex flex-1">
              <div className="flex w-[17px] shrink-0 flex-col items-center pt-[3px]">
                <div className="h-[3px] w-[12px] border-y border-[#bcbcbc]" />
                {drawTools.map((t) => (
                  <ToolButton key={t} name={t} />
                ))}
                <button aria-label="多行文字" className="h-[13px] text-[12px] leading-[13px] font-semibold text-[#2a2d33]">A</button>
                <div className="mt-[3px] h-px w-[14px] bg-[#b5b5b5]" />
              </div>
              <div className="flex min-w-0 flex-1 flex-col border-l border-[#777]">
                <ModelSpace />
                <LayoutTabs />
              </div>
              <div className="flex w-[18px] shrink-0 flex-col items-center pt-[3px]">
                <div className="h-[3px] w-[12px] border-y border-[#bcbcbc]" />
                {modifyTools.map((t) => (
                  <ToolButton key={t} name={t} />
                ))}
                <div className="my-[4px] h-[4px] w-[12px] border-y border-[#bcbcbc]" />
                {['front', 'above', 'back', 'under'].map((t) => (
                  <ToolButton key={t} name={t} />
                ))}
                <div className="mt-[3px] h-px w-[14px] bg-[#b5b5b5]" />
              </div>
            </div>
            <div className="h-[4px] shrink-0" />
            <CommandLine />
          </div>
        </div>
        <StatusBar />
      </div>

      {/* tray balloon, mostly covered by the banner */}
      <div className="absolute right-[17px] bottom-[25px] z-10 flex h-[43px] w-[60px] flex-col items-end justify-between rounded-[8px] border border-[#333] bg-[#ffffe1] p-[5px]">
        <button aria-label="关闭通知" className="size-[9px] border border-[#bbb] bg-[#ececec] text-[9px] leading-[7px] font-bold">×</button>
        <a href="#notice" className="mr-[2px] border-b border-[#2323d0] pl-[5px] text-[8px] leading-[7px] text-[#2323d0]">...</a>
      </div>
      <Watermark />
    </div>
  )
}
